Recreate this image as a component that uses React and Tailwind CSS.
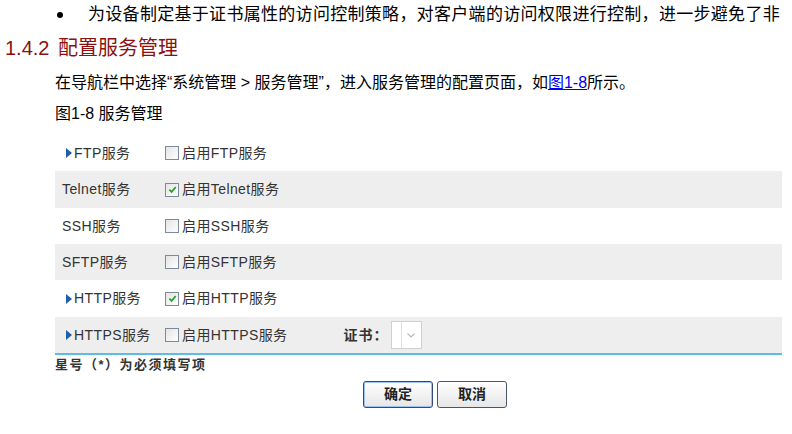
const font = { fontFamily: '"Liberation Sans", "Noto Sans CJK SC", sans-serif' };

const rows = [
    { name: 'FTP服务', arrow: true, checked: false },
    { name: 'Telnet服务', arrow: false, checked: true },
    { name: 'SSH服务', arrow: false, checked: false },
    { name: 'SFTP服务', arrow: false, checked: false },
    { name: 'HTTP服务', arrow: true, checked: true },
    { name: 'HTTPS服务', arrow: true, checked: false, cert: true },
];

const Arrow = () => (
    <svg viewBox="0 0 6 10" className="mr-[2px] h-[10px] w-[6px] shrink-0" aria-hidden="true">
        <path d="M0 0L6 5L0 10Z" fill="#1d5fa8" />
    </svg>
);

const Checkbox = ({ checked }) => (
    <span className="flex h-[14px] w-[14px] shrink-0 items-center justify-center border border-[#7d8a99] bg-gradient-to-br from-[#e4e4e4] to-white">
        {checked && (
            <svg viewBox="0 0 10 10" className="h-[9px] w-[9px]" aria-hidden="true">
                <path d="M1.5 5.2L4 7.6L8.6 2.2" fill="none" stroke="#2ba12b" strokeWidth="2" />
            </svg>
        )}
    </span>
);

export default function App() {
    return (
        <div className="h-[434px] w-[792px] overflow-hidden bg-white text-black" style={font}>
            <div className="flex h-[30px] items-center overflow-hidden whitespace-nowrap text-[17px] tracking-[0.3px]">
                <span className="ml-[57px] mr-[25px] h-[6px] w-[6px] shrink-0 rounded-full bg-black" />
                <span className="min-w-0 overflow-hidden">为设备制定基于证书属性的访问控制策略，对客户端的访问权限进行控制，进一步避免了非</span>
            </div>
            <div className="flex h-[36px] items-center text-[20px] text-[#8b1010]">
                <span className="ml-[5px] w-[53px]">1.4.2</span>
                <span>配置服务管理</span>
            </div>
            <div className="ml-[55px] flex h-[34px] items-center text-[16px]">
                在导航栏中选择“系统管理 &gt; 服务管理”，进入服务管理的配置页面，如
                <a href="#fig1-8" className="text-[#0000ee] underline">图1-8</a>
                所示。
            </div>
            <div className="ml-[55px] flex h-[28px] items-center text-[16px]">图1-8 服务管理</div>

            <div className="ml-[55px] mt-[7px] w-[727px] border-b-2 border-[#5bbde3] text-[14px] tracking-[0.4px] text-[#333]">
                {rows.map((row, i) => (
                    <div
                        key={row.name}
                        className={`flex items-center ${i % 2 === 1 ? 'bg-[#eeeeee]' : 'bg-white'} ${
                            i === 1 || i === 4 ? 'h-[37px]' : 'h-[36px]'
                        }`}
                    >
                        <div className={`flex w-[110px] items-center ${row.arrow ? 'pl-[11px]' : 'pl-[7px]'}`}>
                            {row.arrow && <Arrow />}
                            <span>{row.name}</span>
                        </div>
                        <div className="flex items-center gap-[3px]">
                            <Checkbox checked={row.checked} />
                            <span>启用{row.name}</span>
                        </div>
                        {row.cert && (
                            <div className="ml-[56px] flex items-center gap-[2px]">
                                <span className="font-bold tracking-[1px]">证书：</span>
                                <span className="flex h-[28px] w-[31px] border border-[#d0d0d0] bg-white">
                                    <span className="w-[10px] border-r border-[#e0e0e0]" />
                                    <span className="flex flex-1 items-center justify-center">
                                        <svg viewBox="0 0 8 5" className="h-[5px] w-[8px]" aria-hidden="true">
                                            <path d="M0.5 0.5L4 4L7.5 0.5" fill="none" stroke="#b8b8b8" strokeWidth="1.2" />
                                        </svg>
                                    </span>
                                </span>
                            </div>
                        )}
                    </div>
                ))}
            </div>

            <div className="ml-[55px] mt-[2px] text-[13px] font-bold leading-[16px] tracking-[1.5px] text-[#333]">星号（*）为必须填写项</div>

            <div className="ml-[363px] mt-[8px] flex gap-[4px] text-[14px] font-bold text-[#222]">
                <button
                    type="button"
                    className="h-[27px] w-[70px] rounded-[3px] border border-[#2f4a7a] bg-gradient-to-b from-white to-[#e6e6e6] shadow-[inset_0_0_0_1px_#9fc3ee]"
                >
                    确定
                </button>
                <button
                    type="button"
                    className="h-[27px] w-[70px] rounded-[3px] border border-[#4a5668] bg-gradient-to-b from-white to-[#e6e6e6]"
                >
                    取消
                </button>
            </div>
        </div>
    );
}
